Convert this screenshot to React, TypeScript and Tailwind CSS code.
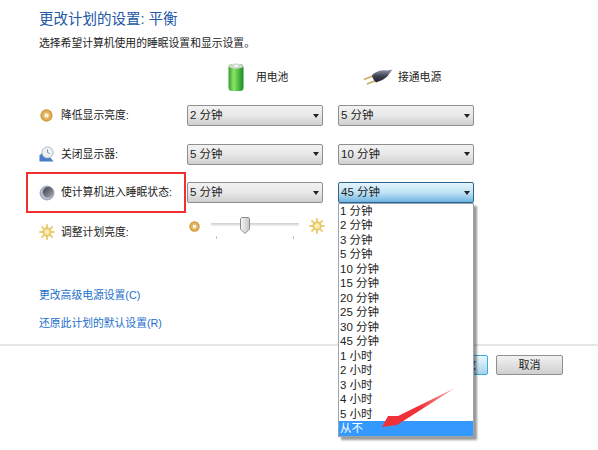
const options = ['1 分钟', '2 分钟', '3 分钟', '5 分钟', '10 分钟', '15 分钟', '20 分钟', '25 分钟', '30 分钟', '45 分钟', '1 小时', '2 小时', '3 小时', '4 小时', '5 小时', '从不'];

function Select({ value, open }: { value: string; open?: boolean }) {
  return (
    <div
      className={`relative flex h-[21px] w-[136px] items-center rounded-[2px] border pl-[2px] pr-[3px] text-[11.5px] text-[#222] ${
        open
          ? 'border-[#2c628b] bg-gradient-to-b from-[#e3f4fc] via-[#bfe3f5] to-[#6fb5e0]'
          : 'border-[#8e8f8f] bg-gradient-to-b from-[#f2f2f2] via-[#e8e8e8] to-[#cfcfcf]'
      }`}
    >
      <span className="flex-1 pt-px leading-none">{value}</span>
      <span className="h-0 w-0 border-x-[3.5px] border-t-[4px] border-x-transparent border-t-[#222]" />
      {open && (
        <div className="absolute left-[-1px] top-[20px] z-10 w-[136px] border border-[#97a5b4] bg-white shadow-[3px_3px_2px_rgba(0,0,0,0.4)]">
          {options.map((o) => (
            <div
              key={o}
              className={`flex h-[14.47px] items-center pl-[1px] pt-px text-[11.5px] leading-none ${o === '从不' ? 'bg-[#3399ff] text-white' : 'text-[#222]'}`}
            >
              {o}
            </div>
          ))}
        </div>
      )}
    </div>
  );
}

function DimIcon({ size = 13 }: { size?: number }) {
  return (
    <svg width={size} height={size} viewBox="0 0 14 14">
      <circle cx="7" cy="7" r="6.6" fill="#cf9a3e" />
      <circle cx="7" cy="7" r="5" fill="#e2b45c" />
      <circle cx="7" cy="7" r="2.4" fill="#f8f1de" />
    </svg>
  );
}

function SunIcon({ id }: { id: string }) {
  return (
    <svg width="16" height="16" viewBox="0 0 16 16">
      <defs>
        <radialGradient id={id}>
          <stop offset="0%" stopColor="#fffbe0" />
          <stop offset="100%" stopColor="#f4cf4c" />
        </radialGradient>
      </defs>
      <g stroke="#ecd070" strokeWidth="2" strokeLinecap="round">
        <path d="M8 1v2M8 13v2M1 8h2M13 8h2M3 3l1.4 1.4M11.6 11.6L13 13M13 3l-1.4 1.4M4.4 11.6L3 13" />
      </g>
      <circle cx="8" cy="8" r="4.2" fill={`url(#${id})`} stroke="#a89a66" strokeWidth="0.5" />
    </svg>
  );
}

function ClockIcon() {
  return (
    <svg width="15" height="16" viewBox="0 0 15 16">
      <path d="M0.5 15.5V9.5L4 6h3l7.5 9.5z" fill="#4a7bc8" />
      <circle cx="8.5" cy="6.5" r="5.6" fill="#eef1f4" stroke="#a4aebb" strokeWidth="0.9" />
      <path d="M8.5 3.4v3.1l2.2 1" fill="none" stroke="#77838f" strokeWidth="0.9" />
    </svg>
  );
}

function SleepIcon() {
  return (
    <svg width="16" height="16" viewBox="0 0 16 16">
      <defs>
        <linearGradient id="moonDark" x1="0" x2="1" y1="0" y2="1">
          <stop offset="0%" stopColor="#3a3d46" />
          <stop offset="100%" stopColor="#a8aab2" />
        </linearGradient>
      </defs>
      <circle cx="8" cy="8" r="7" fill="#b4bcd0" stroke="#7c8296" strokeWidth="0.6" />
      <circle cx="9.2" cy="7.2" r="5.4" fill="url(#moonDark)" />
    </svg>
  );
}

function BatteryIcon() {
  return (
    <svg width="16" height="29" viewBox="0 0 16 29">
      <defs>
        <linearGradient id="batt" x1="0" x2="1" y1="0" y2="0">
          <stop offset="0%" stopColor="#2f9e2c" />
          <stop offset="35%" stopColor="#8fe26a" />
          <stop offset="70%" stopColor="#45b83a" />
          <stop offset="100%" stopColor="#1f8a22" />
        </linearGradient>
      </defs>
      <rect x="0.5" y="1" width="15" height="27" rx="3.5" fill="url(#batt)" />
      <ellipse cx="8" cy="3.2" rx="7" ry="2.6" fill="#cfd8cf" />
      <ellipse cx="8" cy="3" rx="2.5" ry="1" fill="#f5f7f5" />
    </svg>
  );
}

function PlugIcon() {
  return (
    <svg width="30" height="16" viewBox="0 0 30 16">
      <defs>
        <linearGradient id="plug" x1="0" x2="0" y1="0" y2="1">
          <stop offset="0%" stopColor="#9297ae" />
          <stop offset="55%" stopColor="#3a3d4c" />
          <stop offset="100%" stopColor="#23252e" />
        </linearGradient>
      </defs>
      <path d="M1 10.5L11 6.5M4 15l10-4" stroke="#c9a765" strokeWidth="1.5" fill="none" />
      <path d="M9 6C13 1.5 20 0.5 24 1.5L29.5 0.5 26 5C24 9 18 12 13 13.5 10.5 11 9 8 9 6z" fill="url(#plug)" />
    </svg>
  );
}

function SliderThumb() {
  return (
    <svg width="10" height="17" viewBox="0 0 10 17">
      <defs>
        <linearGradient id="thumb" x1="0" x2="1" y1="0" y2="0">
          <stop offset="0%" stopColor="#f6f6f6" />
          <stop offset="100%" stopColor="#c4c4c4" />
        </linearGradient>
      </defs>
      <path d="M1.5 0.5h7l1 1V12L5 16.5 0.5 12V1.5z" fill="url(#thumb)" stroke="#8a8a8a" />
    </svg>
  );
}

function Row({ icon, label, battery, plugged, open }: { icon: React.ReactNode; label: string; battery: string; plugged: string; open?: boolean }) {
  return (
    <div className="flex h-[21px] items-center">
      <div className="flex w-[148px] items-center text-[10.8px] text-[#222]">
        <span className="flex w-[22px] justify-start">{icon}</span>
        <span>{label}</span>
      </div>
      <Select value={battery} />
      <div className="ml-[15px]">
        <Select value={plugged} open={open} />
      </div>
    </div>
  );
}

export default function App() {
  return (
    <div className="relative h-[450px] w-[598px] overflow-hidden bg-white font-['Liberation_Sans','Noto_Sans_CJK_SC',sans-serif]">
      <div className="pl-[39px] pt-[9px]">
        <h1 className="text-[14.5px] font-normal leading-[20px] text-[#2358a6]">更改计划的设置: 平衡</h1>
        <p className="mt-[6px] text-[10.8px] leading-[16px] text-[#222]">选择希望计算机使用的睡眠设置和显示设置。</p>

        <div className="mt-[11px] flex h-[30px] items-center text-[10.8px] text-[#222]">
          <div className="ml-[189px]"><BatteryIcon /></div>
          <span className="ml-[12px] w-[33px] whitespace-nowrap">用电池</span>
          <div className="ml-[74px]"><PlugIcon /></div>
          <span className="ml-[5px] whitespace-nowrap">接通电源</span>
        </div>

        <div className="mt-[13px] flex flex-col gap-[17.5px]">
          <Row icon={<span className="ml-px flex"><DimIcon /></span>} label="降低显示亮度:" battery="2 分钟" plugged="5 分钟" />
          <Row icon={<ClockIcon />} label="关闭显示器:" battery="5 分钟" plugged="10 分钟" />
          <Row icon={<SleepIcon />} label="使计算机进入睡眠状态:" battery="5 分钟" plugged="45 分钟" open />
        </div>

        <div className="mt-[14px] flex h-[28px] items-start">
          <div className="flex h-[30px] w-[148px] items-center text-[10.8px] text-[#222]">
            <span className="flex w-[22px]"><SunIcon id="sunA" /></span>
            <span>调整计划亮度:</span>
          </div>
          <div className="ml-[2px] flex items-start">
            <span className="mt-[4px]"><DimIcon size={11} /></span>
            <div className="relative ml-[11px] h-[28px] w-[88px]">
              <div className="absolute left-0 right-0 top-[6px] h-[3px] bg-gradient-to-b from-[#cfcfcf] to-[#f0f0f0]" />
              <div className="absolute left-[29px] top-0 flex"><SliderThumb /></div>
              <div className="absolute left-[5px] top-[19px] h-[3px] w-px bg-[#c4c4c4]" />
              <div className="absolute right-[5px] top-[19px] h-[3px] w-px bg-[#c4c4c4]" />
            </div>
            <span className="ml-[10px] mt-[1px]"><SunIcon id="sunB" /></span>
          </div>
        </div>

        <div className="mt-[42px] text-[10.8px] leading-[16px] text-[#1b6fc9]">更改高级电源设置(C)</div>
        <div className="mt-[12px] text-[10.8px] leading-[16px] text-[#1b6fc9]">还原此计划的默认设置(R)</div>
      </div>

      <div className="mt-[13px] h-[2px] bg-[#e6e6e6]" />

      <div className="mt-[9px] flex justify-end gap-[8px] pr-[35px]">
        <button className="h-[20px] w-[68px] rounded-[2px] border border-[#3ca9e0] bg-gradient-to-b from-[#eaf6fd] to-[#a7d3ea] text-[11px] leading-none text-[#222]">保存修改</button>
        <button className="h-[20px] w-[67px] rounded-[2px] border border-[#8e8f8f] bg-gradient-to-b from-[#f2f2f2] to-[#cfcfcf] text-[11px] leading-none text-[#222]">取消</button>
      </div>

      {/* 红框和箭头是截图上的标注 */}
      <div className="absolute left-[26px] top-[172px] h-[41px] w-[160px] border-2 border-[#f03030]" />
      <svg className="absolute left-[380px] top-[385px] z-20" width="78" height="50" viewBox="0 0 78 50">
        <defs>
          <linearGradient id="arrow" gradientUnits="userSpaceOnUse" x1="75" y1="3" x2="40" y2="22">
            <stop offset="0%" stopColor="#f8b0b4" />
            <stop offset="100%" stopColor="#f0313a" />
          </linearGradient>
        </defs>
        <path d="M75 3L18 31 8 31 2 42 17 40z" fill="url(#arrow)" />
      </svg>
    </div>
  );
}
